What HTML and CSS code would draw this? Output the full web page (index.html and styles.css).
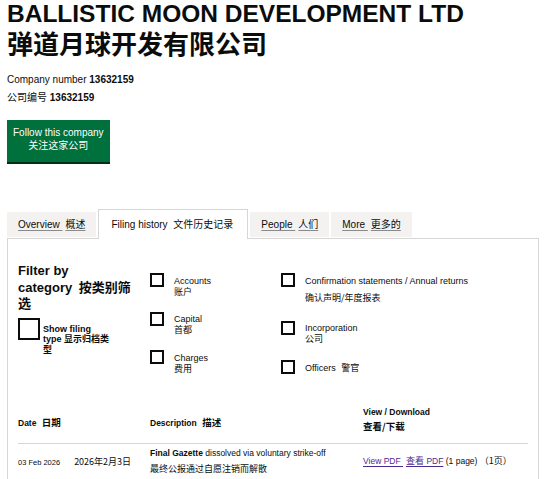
FILE: index.html
```html
<!DOCTYPE html>
<html lang="en">
<head>
<meta charset="utf-8">
<title>BALLISTIC MOON DEVELOPMENT LTD</title>
<link rel="stylesheet" href="styles.css">
</head>
<body>
<main class="page">
  <h1 class="company-name">
    <span class="name-en">BALLISTIC MOON DEVELOPMENT LTD</span>
    <span class="name-zh">弹道月球开发有限公司</span>
  </h1>
  <p class="company-number">Company number <strong>13632159</strong><br><span class="zh">公司编号</span> <strong>13632159</strong></p>
  <a class="follow-button" href="#">Follow this company<br><span class="zh">关注这家公司</span></a>

  <ul class="tabs">
    <li class="tab"><a href="#">Overview <span class="zh tr">概述</span></a></li>
    <li class="tab tab-active"><a>Filing history <span class="zh tr">文件历史记录</span></a></li>
    <li class="tab"><a href="#">People <span class="zh tr">人们</span></a></li>
    <li class="tab"><a href="#">More <span class="zh tr">更多的</span></a></li>
  </ul>

  <section class="panel">
    <div class="filters">
      <div class="filter-col">
        <h2 class="filter-heading">Filter by<br>category <span class="zh tr">按类别筛选</span></h2>
        <label class="show-type"><span class="box box-lg"></span><span class="show-type-text">Show filing<br>type <span class="zh">显示归档类型</span></span></label>
      </div>
      <div class="options options-mid">
        <label class="option"><span class="box"></span><span class="option-text">Accounts<br><span class="zh">账户</span></span></label>
        <label class="option"><span class="box"></span><span class="option-text">Capital<br><span class="zh">首都</span></span></label>
        <label class="option"><span class="box"></span><span class="option-text">Charges<br><span class="zh">费用</span></span></label>
      </div>
      <div class="options options-right">
        <label class="option"><span class="box"></span><span class="option-text">Confirmation statements / Annual returns<span class="zh zh-line">确认声明/年度报表</span></span></label>
        <label class="option"><span class="box"></span><span class="option-text">Incorporation<br><span class="zh">公司</span></span></label>
        <label class="option"><span class="box"></span><span class="option-text">Officers <span class="zh tr">警官</span></span></label>
      </div>
    </div>

    <table class="filings">
      <colgroup><col class="col-date"><col class="col-desc"><col class="col-view"></colgroup>
      <thead>
        <tr>
          <th class="th-low">Date <span class="zh tr">日期</span></th>
          <th class="th-low">Description <span class="zh tr">描述</span></th>
          <th>View / Download<br><span class="zh">查看/下载</span></th>
        </tr>
      </thead>
      <tbody>
        <tr>
          <td class="date"><span class="date-en">03 Feb 2026</span><span class="zh date-zh">2026年2月3日</span></td>
          <td class="desc"><strong>Final Gazette</strong> dissolved via voluntary strike-off<span class="zh desc-zh">最终公报通过自愿注销而解散</span></td>
          <td class="view"><a href="#">View PDF <span class="zh tr">查看</span> PDF</a> (1 page) <span class="zh">（1页）</span></td>
        </tr>
      </tbody>
    </table>
  </section>
</main>
</body>
</html>
```

FILE: styles.css
```css
* { box-sizing: border-box; }

html, body {
  margin: 0;
  padding: 0;
  background: #ffffff;
}

body {
  font-family: "Liberation Sans", Arial, "Noto Sans CJK SC", sans-serif;
  color: #0b0c0c;
}

/* inline CJK runs: keep them from growing the line boxes */
.zh {
  font-family: "Noto Sans CJK SC", sans-serif;
  line-height: 1;
}
.tr { margin-left: 3px; }

.page { padding: 0 11px 0 7px; }

/* Heading */
.company-name { margin: 0; font-weight: 700; }
.name-en { display: block; font-size: 24.5px; line-height: 27px; }
.name-zh {
  display: block;
  font-family: "Noto Sans CJK SC", sans-serif;
  font-size: 26px;
  line-height: 32px;
}

.company-number {
  margin: 12px 0 0;
  font-size: 10px;
  line-height: 18px;
}

.follow-button {
  display: block;
  width: max-content;
  margin-top: 13px;
  padding: 6px 6px 10px;
  background: #00703c;
  color: #ffffff;
  text-decoration: none;
  font-size: 10px;
  line-height: 13px;
  text-align: center;
  box-shadow: 0 2px 0 #002d18;
}

/* Tabs */
.tabs {
  display: flex;
  align-items: flex-end;
  gap: 2px;
  list-style: none;
  margin: 47px 0 0;
  padding: 0;
}
.tab { margin-bottom: 1px; }
.tab a {
  display: block;
  height: 25px;
  padding: 6px 11px;
  font-size: 10px;
  line-height: 13px;
  background: #f3f2f1;
  color: #0b0c0c;
  text-decoration: underline;
  text-decoration-thickness: 1px;
  text-underline-offset: 2px;
  text-decoration-color: #8a8a8a;
}
.tab-active {
  margin-bottom: -1px;
  position: relative;
  z-index: 1;
}
.tab-active a {
  height: 30px;
  padding: 8px 14px 8px 12px;
  background: #ffffff;
  border: 1px solid #d6d6d6;
  border-bottom: 0;
  text-decoration: none;
}

/* Panel */
.panel {
  border: 1px solid #d6d6d6;
  padding: 24px 10px 0;
}

.filters {
  display: grid;
  grid-template-columns: 132px 131px 1fr;
  align-items: start;
}

.filter-heading {
  margin: 0;
  width: 118px;
  font-size: 13px;
  line-height: 16.5px;
  font-weight: 700;
}

.show-type {
  display: flex;
  gap: 3px;
  align-items: flex-start;
  margin-top: 5px;
}

.box {
  flex: none;
  width: 14px;
  height: 14px;
  border: 2px solid #0b0c0c;
  background: #ffffff;
}
.box-lg { width: 22px; height: 22px; }

.show-type-text {
  width: 70px;
  padding-top: 6px;
  font-size: 9px;
  line-height: 10.5px;
  font-weight: 700;
}

.options {
  display: flex;
  flex-direction: column;
  padding-top: 10px;
}
.options-mid { gap: 14px; }
.options-right { gap: 15px; }

.option {
  display: flex;
  gap: 10px;
  align-items: flex-start;
}
.option-text {
  padding-top: 2.5px;
  font-size: 9px;
  line-height: 11px;
}
.zh-line {
  display: block;
  margin: 5px 0 3px;
  line-height: 11px;
}

/* Table */
.filings {
  width: 100%;
  margin-top: 27px;
  border-collapse: collapse;
  table-layout: fixed;
}
.col-date { width: 132px; }
.col-desc { width: 213px; }

.filings th {
  text-align: left;
  font-size: 8.5px;
  line-height: 15px;
  font-weight: 700;
  padding: 3px 0 8px;
  vertical-align: bottom;
  border-bottom: 1px solid #d6d6d6;
}
.filings th.th-low { padding-bottom: 12px; }
.filings th .zh { font-size: 9.5px; }

.filings td {
  padding: 3px 0 7px;
  font-size: 8.5px;
  line-height: 12px;
  vertical-align: middle;
}
.filings td.date { padding-top: 7px; }
.filings td .zh { font-size: 9px; }

.date-en { font-size: 7.5px; }
.date-zh { margin-left: 14px; }

.filings td .desc-zh {
  display: block;
  margin-top: 4px;
  line-height: 12px;
}

.view a {
  color: #4c2c92;
  text-decoration: underline;
  text-decoration-thickness: 1px;
  text-underline-offset: 2px;
}
```
